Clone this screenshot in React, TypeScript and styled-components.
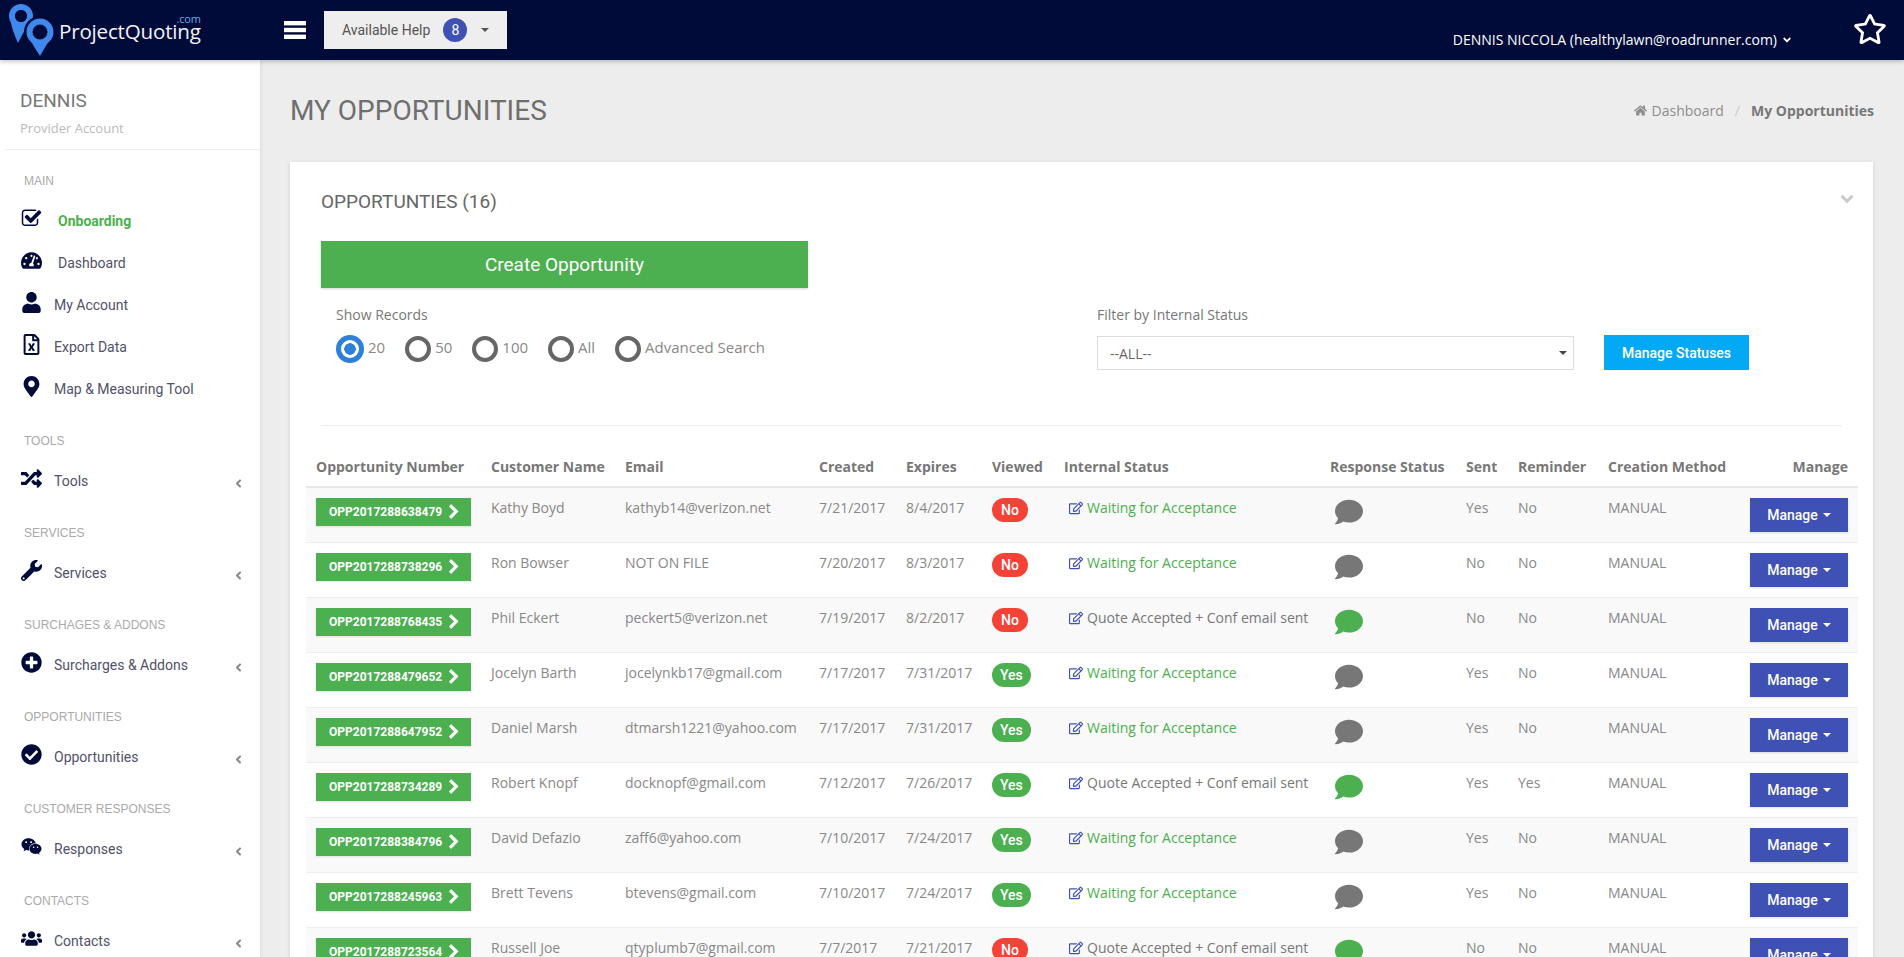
import styled, { createGlobalStyle } from 'styled-components'
import {
  FaAngleDown,
  FaAngleLeft,
  FaCheckCircle,
  FaComment,
  FaHome,
  FaMapMarkerAlt,
  FaPlusCircle,
  FaRandom,
  FaRegEdit,
  FaRegFileExcel,
  FaRegStar,
  FaTachometerAlt,
  FaUser,
  FaUsers,
  FaWeixin,
  FaWrench,
} from 'react-icons/fa'

const GlobalStyle = createGlobalStyle`
  html, body {
    margin: 0;
    padding: 0;
    height: 100%;
    overflow: hidden;
    background: #ededed;
    font-family: "Open Sans", "Liberation Sans", sans-serif;
  }
  * { box-sizing: border-box; }
`

const Page = styled.div`
  display: flex;
  flex-direction: column;
  height: 100vh;
  overflow: hidden;
`
const TopBar = styled.header`
  display: flex;
  align-items: center;
  flex: none;
  height: 60px;
  background: #000b3a;
  box-shadow: 0 2px 4px rgba(0, 0, 0, 0.2);
  position: relative;
  z-index: 2;
`
const Brand = styled.div`
  display: flex;
  align-items: center;
  width: 284px;
  height: 60px;
  padding-left: 9px;
`
const BrandName = styled.div`
  position: relative;
  margin: 1px 0 0 4px;
  font-family: "Open Sans", sans-serif;
  font-size: 20.6px;
  font-weight: 500;
  letter-spacing: -0.2px;
  color: #f2f4f8;
`
const BrandCom = styled.span`
  position: absolute;
  right: 0;
  top: -5px;
  font-size: 11px;
  line-height: 14px;
  color: #6ea8e8;
`
const MenuButton = styled.div`
  display: flex;
  width: 40px;
  color: #fff;
`
const HelpButton = styled.div`
  display: flex;
  align-items: center;
  width: 183px;
  height: 38px;
  padding-left: 18px;
  background: #eeeeee;
  font-family: Roboto, sans-serif;
  font-size: 14px;
  color: #555;
`
const HelpBadge = styled.span`
  display: flex;
  align-items: center;
  justify-content: center;
  width: 24px;
  height: 24px;
  margin: 0 14px 0 13px;
  border-radius: 50%;
  background: #3f51b5;
  color: #fff;
`
const Caret = styled.span<{ $color: string }>`
  display: inline-block;
  width: 0;
  height: 0;
  border-left: 4px solid transparent;
  border-right: 4px solid transparent;
  border-top: 4px solid ${(p) => p.$color};
`
const UserMenu = styled.div`
  display: flex;
  align-items: center;
  gap: 4px;
  margin: 19px 0 0 auto;
  font-family: "Open Sans", sans-serif;
  font-size: 14px;
  color: #fff;
`
const StarButton = styled.div`
  display: flex;
  margin: -3px 17px 0 60px;
  font-size: 34px;
  color: #fff;
`
const Body = styled.div`
  display: flex;
  flex: 1;
  min-height: 0;
`
const Sidebar = styled.aside`
  flex: none;
  width: 260px;
  background: #fff;
  box-shadow: 1px 0 3px rgba(0, 0, 0, 0.08);
  overflow: hidden;
`
const Profile = styled.div`
  height: 90px;
  margin-left: 5px;
  padding: 30px 0 0 15px;
  border-bottom: 1px solid #eeeeee;
`
const ProfileName = styled.div`
  font-family: Roboto, sans-serif;
  font-size: 19px;
  line-height: 22px;
  color: #777;
`
const ProfileRole = styled.div`
  margin-top: 7px;
  font-size: 13px;
  line-height: 18px;
  color: #bbb;
`
const NavLabel = styled.div`
  height: 20px;
  margin: 21px 0 9px 24px;
  font-family: "Liberation Sans", Arial, sans-serif;
  font-size: 12px;
  line-height: 20px;
  color: #aaa;
`
const NavRow = styled.div`
  display: flex;
  align-items: center;
  height: 42px;
  padding: 0 15px 0 20px;
  font-family: Roboto, sans-serif;
  font-size: 14px;
  color: #51516a;
`
const NavIcon = styled.span`
  display: flex;
  justify-content: center;
  flex: none;
  width: 23px;
  margin-bottom: 6px;
  font-size: 21px;
  color: #000b3a;
`
const NavText = styled.span<{ $shift?: boolean; $on?: boolean }>`
  margin-left: ${(p) => (p.$shift ? '15px' : '11px')};
  font-weight: ${(p) => (p.$on ? 700 : 400)};
  color: ${(p) => (p.$on ? '#4caf50' : 'inherit')};
`
const NavArrow = styled.span`
  display: flex;
  margin: 4px 0 0 auto;
  font-size: 13px;
  color: #888;
`
const Main = styled.main`
  flex: 1;
  min-width: 0;
  padding: 0 31px 0 30px;
`
const PageHead = styled.div`
  display: flex;
  align-items: center;
  justify-content: space-between;
  height: 102px;
  padding-bottom: 1px;
`
const PageTitle = styled.h1`
  margin: 0;
  font-family: Roboto, sans-serif;
  font-size: 28px;
  font-weight: 400;
  color: #6f6f6f;
`
const Crumbs = styled.div`
  display: flex;
  align-items: center;
  margin-right: -1px;
  font-size: 14px;
  color: #8d8d8d;
`
const CrumbSep = styled.span`
  margin: 0 11px;
  color: #ccc;
`
const CrumbNow = styled.strong`
  font-weight: 700;
  color: #777;
`
const CrumbHome = styled.span`
  display: flex;
  margin-right: 5px;
  font-size: 13px;
`
const Card = styled.section`
  padding: 0 31px;
  background: #fff;
  box-shadow: 0 1px 4px rgba(0, 0, 0, 0.12);
`
const CardHead = styled.div`
  display: flex;
  align-items: center;
  justify-content: space-between;
  height: 79px;
`
const CardTitle = styled.h2`
  margin: 0;
  font-family: Roboto, sans-serif;
  font-size: 19px;
  font-weight: 400;
  color: #666;
`
const CardToggle = styled.span`
  display: flex;
  margin: -6px -15px 0 0;
  font-size: 20px;
  color: #ccc;
`
const CreateButton = styled.div`
  display: flex;
  align-items: center;
  justify-content: center;
  width: 487px;
  height: 47px;
  background: #4caf50;
  box-shadow: 0 1px 2px rgba(0, 0, 0, 0.16);
  font-family: Roboto, sans-serif;
  font-size: 19px;
  font-weight: 400;
  color: #fff;
`
const Filters = styled.div`
  display: grid;
  grid-template-columns: 761px 1fr;
  padding: 17px 0 55px 15px;
  border-bottom: 1px solid #eeeeee;
`
const FieldLabel = styled.div`
  margin-bottom: 10px;
  font-size: 14px;
  line-height: 20px;
  color: #777;
`
const RadioRow = styled.div`
  display: flex;
  align-items: center;
  gap: 20px;
  height: 28px;
  font-size: 15px;
  color: #888;
`
const RadioItem = styled.label`
  display: flex;
  align-items: center;
  gap: 4px;
`
const RadioText = styled.span`
  margin-bottom: 4px;
`
const RadioBox = styled.input`
  appearance: none;
  flex: none;
  width: 26px;
  height: 26px;
  margin: 0;
  border: 4px solid #666;
  border-radius: 50%;
  background: #fff;
  &:checked {
    width: 28px;
    height: 28px;
    border: 5px solid #2f80d8;
    background: radial-gradient(circle, #2f80d8 0 5.5px, #fff 6px);
  }
`
const FilterControls = styled.div`
  display: flex;
  align-items: center;
  gap: 30px;
`
const SelectWrap = styled.div`
  position: relative;
  display: flex;
  span {
    position: absolute;
    right: 7px;
    top: 15px;
    pointer-events: none;
  }
`
const StatusSelect = styled.select`
  width: 477px;
  height: 34px;
  padding: 1px 0 0 12px;
  border: 1px solid #ddd;
  border-radius: 0;
  appearance: none;
  background: #fff;
  font-family: "Open Sans", sans-serif;
  font-size: 14px;
  color: #666;
`
const StatusButton = styled.div`
  display: flex;
  align-items: center;
  justify-content: center;
  width: 145px;
  height: 35px;
  background: #03a9f4;
  font-family: Roboto, sans-serif;
  font-size: 14px;
  font-weight: 500;
  color: #fff;
`
const Table = styled.table`
  width: 1552px;
  margin-left: -15px;
  border-collapse: collapse;
  table-layout: fixed;
  font-size: 14px;
`
const Col = styled.col<{ $w: number }>`
  width: ${(p) => p.$w}px;
`
const Th = styled.th<{ $right?: boolean }>`
  height: 61px;
  padding: 0 10px 9px;
  border-bottom: 2px solid #e8e8e8;
  vertical-align: bottom;
  text-align: ${(p) => (p.$right ? 'right' : 'left')};
  font-weight: 700;
  line-height: 20px;
  white-space: nowrap;
  color: #777;
`
const Row = styled.tr`
  border-top: 1px solid #eeeeee;
  &:nth-child(odd) {
    background: #f9f9f9;
  }
`
const Td = styled.td<{ $right?: boolean }>`
  height: 55px;
  padding: 10px;
  vertical-align: top;
  text-align: ${(p) => (p.$right ? 'right' : 'left')};
  line-height: 20px;
  white-space: nowrap;
  color: #888;
`
const OppButton = styled.div`
  display: flex;
  align-items: center;
  gap: 4px;
  width: 155px;
  height: 28px;
  padding-left: 13px;
  background: #4caf50;
  box-shadow: 0 1px 2px rgba(0, 0, 0, 0.1);
  font-family: Roboto, sans-serif;
  font-size: 12px;
  font-weight: 700;
  color: #fff;
`
const Pill = styled.span<{ $yes: boolean }>`
  display: inline-block;
  height: 24px;
  padding: 0 ${(p) => (p.$yes ? '8px' : '9px')};
  border-radius: 12px;
  background: ${(p) => (p.$yes ? '#4caf50' : '#f44336')};
  font-family: Roboto, sans-serif;
  font-size: 14px;
  font-weight: 500;
  line-height: 24px;
  color: #fff;
`
const StatusText = styled.span<{ $waiting: boolean }>`
  display: flex;
  align-items: center;
  gap: 4px;
  margin-left: 5px;
  color: ${(p) => (p.$waiting ? '#4caf50' : '#777')};
  svg {
    color: #3f51b5;
  }
`
const Bubble = styled.span<{ $on: boolean }>`
  display: flex;
  margin-left: 5px;
  font-size: 28px;
  color: ${(p) => (p.$on ? '#4caf50' : '#777')};
`
const ManageButton = styled.div`
  display: inline-flex;
  align-items: center;
  justify-content: center;
  gap: 5px;
  width: 98px;
  height: 34px;
  background: #3f51b5;
  box-shadow: 0 1px 2px rgba(0, 0, 0, 0.12);
  font-family: Roboto, sans-serif;
  font-size: 14px;
  font-weight: 500;
  color: #fff;
`

function LogoMark() {
  return (
    <svg width="46" height="56" viewBox="9 2 46 56">
      <circle cx="21" cy="16" r="9" fill="none" stroke="#3f88ec" strokeWidth="6" />
      <path d="M10.5 20 Q12 30 18 43 L27 26 Z" fill="#3f88ec" />
      <circle cx="21" cy="16" r="6" fill="#000b3a" />
      <circle cx="40" cy="32" r="12" fill="none" stroke="#000b3a" strokeWidth="8" />
      <path d="M28.5 36 Q33 46 40 56 Q46 46 51.5 36 Z" fill="#3f88ec" />
      <circle cx="40" cy="32" r="10.5" fill="#000b3a" stroke="#3f88ec" strokeWidth="6" />
    </svg>
  )
}

function MenuBars() {
  return (
    <svg width="22" height="18" viewBox="0 0 22 18" fill="currentColor">
      <rect width="22" height="4.4" />
      <rect y="6.8" width="22" height="4.4" />
      <rect y="13.6" width="22" height="4.4" />
    </svg>
  )
}

function CheckSquare() {
  return (
    <svg width="21" height="21" viewBox="0 0 1792 1792" fill="currentColor">
      <path d="M1472 930v318q0 119-84.5 203.5t-203.5 84.5h-832q-119 0-203.5-84.5t-84.5-203.5v-832q0-119 84.5-203.5t203.5-84.5h832q63 0 117 25 15 7 18 23 3 17-9 29l-49 49q-10 10-23 10-3 0-9-2-23-6-45-6h-832q-66 0-113 47t-47 113v832q0 66 47 113t113 47h832q66 0 113-47t47-113v-254q0-13 9-22l64-64q10-10 23-10 6 0 12 3 20 8 20 29zm231-489l-814 814q-24 24-57 24t-57-24l-430-430q-24-24-24-57t24-57l110-110q24-24 57-24t57 24l263 263 647-647q24-24 57-24t57 24l110 110q24 24 24 57t-24 57z" />
    </svg>
  )
}

function ChevronBold() {
  return (
    <svg width="16" height="16" viewBox="0 0 1792 1792" fill="currentColor">
      <path d="M1363 877l-742 742q-19 19-45 19t-45-19l-166-166q-19-19-19-45t19-45l531-531-531-531q-19-19-19-45t19-45l166-166q19-19 45-19t45 19l742 742q19 19 19 45t-19 45z" />
    </svg>
  )
}

const mainNav = [
  { text: 'Onboarding', icon: <CheckSquare />, shift: true, on: true },
  { text: 'Dashboard', icon: <FaTachometerAlt />, shift: true },
  { text: 'My Account', icon: <FaUser /> },
  { text: 'Export Data', icon: <FaRegFileExcel /> },
  { text: 'Map & Measuring Tool', icon: <FaMapMarkerAlt /> },
]

const navGroups = [
  { label: 'TOOLS', text: 'Tools', icon: <FaRandom /> },
  { label: 'SERVICES', text: 'Services', icon: <FaWrench /> },
  { label: 'SURCHAGES & ADDONS', text: 'Surcharges & Addons', icon: <FaPlusCircle /> },
  { label: 'OPPORTUNITIES', text: 'Opportunities', icon: <FaCheckCircle /> },
  { label: 'CUSTOMER RESPONSES', text: 'Responses', icon: <FaWeixin /> },
  { label: 'CONTACTS', text: 'Contacts', icon: <FaUsers /> },
]

const WAITING = 'Waiting for Acceptance'
const QUOTE = 'Quote Accepted + Conf email sent'

const rows = [
  ['OPP2017288638479', 'Kathy Boyd', 'kathyb14@verizon.net', '7/21/2017', '8/4/2017', 'No', WAITING, 'Yes', 'No'],
  ['OPP2017288738296', 'Ron Bowser', 'NOT ON FILE', '7/20/2017', '8/3/2017', 'No', WAITING, 'No', 'No'],
  ['OPP2017288768435', 'Phil Eckert', 'peckert5@verizon.net', '7/19/2017', '8/2/2017', 'No', QUOTE, 'No', 'No'],
  ['OPP2017288479652', 'Jocelyn Barth', 'jocelynkb17@gmail.com', '7/17/2017', '7/31/2017', 'Yes', WAITING, 'Yes', 'No'],
  ['OPP2017288647952', 'Daniel Marsh', 'dtmarsh1221@yahoo.com', '7/17/2017', '7/31/2017', 'Yes', WAITING, 'Yes', 'No'],
  ['OPP2017288734289', 'Robert Knopf', 'docknopf@gmail.com', '7/12/2017', '7/26/2017', 'Yes', QUOTE, 'Yes', 'Yes'],
  ['OPP2017288384796', 'David Defazio', 'zaff6@yahoo.com', '7/10/2017', '7/24/2017', 'Yes', WAITING, 'Yes', 'No'],
  ['OPP2017288245963', 'Brett Tevens', 'btevens@gmail.com', '7/10/2017', '7/24/2017', 'Yes', WAITING, 'Yes', 'No'],
  ['OPP2017288723564', 'Russell Joe', 'qtyplumb7@gmail.com', '7/7/2017', '7/21/2017', 'No', QUOTE, 'No', 'No'],
]

const columns = [175, 134, 194, 87, 86, 72, 266, 136, 52, 90, 130, 130]
const headers = [
  'Opportunity Number',
  'Customer Name',
  'Email',
  'Created',
  'Expires',
  'Viewed',
  'Internal Status',
  'Response Status',
  'Sent',
  'Reminder',
  'Creation Method',
]

export default function App() {
  return (
    <Page>
      <GlobalStyle />
      <TopBar>
        <Brand>
          <LogoMark />
          <BrandName>
            ProjectQuoting
            <BrandCom>.com</BrandCom>
          </BrandName>
        </Brand>
        <MenuButton>
          <MenuBars />
        </MenuButton>
        <HelpButton>
          Available Help
          <HelpBadge>8</HelpBadge>
          <Caret $color="#555" />
        </HelpButton>
        <UserMenu>
          DENNIS NICCOLA (healthylawn@roadrunner.com)
          <FaAngleDown size={12} />
        </UserMenu>
        <StarButton>
          <FaRegStar />
        </StarButton>
      </TopBar>
      <Body>
        <Sidebar>
          <Profile>
            <ProfileName>DENNIS</ProfileName>
            <ProfileRole>Provider Account</ProfileRole>
          </Profile>
          <NavLabel>MAIN</NavLabel>
          {mainNav.map((item) => (
            <NavRow key={item.text}>
              <NavIcon>{item.icon}</NavIcon>
              <NavText $shift={item.shift} $on={item.on}>
                {item.text}
              </NavText>
            </NavRow>
          ))}
          {navGroups.map((group) => (
            <div key={group.label}>
              <NavLabel>{group.label}</NavLabel>
              <NavRow>
                <NavIcon>{group.icon}</NavIcon>
                <NavText>{group.text}</NavText>
                <NavArrow>
                  <FaAngleLeft />
                </NavArrow>
              </NavRow>
            </div>
          ))}
        </Sidebar>
        <Main>
          <PageHead>
            <PageTitle>MY OPPORTUNITIES</PageTitle>
            <Crumbs>
              <CrumbHome>
                <FaHome />
              </CrumbHome>
              Dashboard
              <CrumbSep>/</CrumbSep>
              <CrumbNow>My Opportunities</CrumbNow>
            </Crumbs>
          </PageHead>
          <Card>
            <CardHead>
              <CardTitle>OPPORTUNTIES (16)</CardTitle>
              <CardToggle>
                <FaAngleDown />
              </CardToggle>
            </CardHead>
            <CreateButton>Create Opportunity</CreateButton>
            <Filters>
              <div>
                <FieldLabel>Show Records</FieldLabel>
                <RadioRow>
                  {['20', '50', '100', 'All', 'Advanced Search'].map((opt) => (
                    <RadioItem key={opt}>
                      <RadioBox type="radio" name="records" defaultChecked={opt === '20'} />
                      <RadioText>{opt}</RadioText>
                    </RadioItem>
                  ))}
                </RadioRow>
              </div>
              <div>
                <FieldLabel>Filter by Internal Status</FieldLabel>
                <FilterControls>
                  <SelectWrap>
                    <StatusSelect>
                      <option>--ALL--</option>
                    </StatusSelect>
                    <Caret $color="#444" />
                  </SelectWrap>
                  <StatusButton>Manage Statuses</StatusButton>
                </FilterControls>
              </div>
            </Filters>
            <Table>
              <colgroup>
                {columns.map((w, i) => (
                  <Col key={i} $w={w} />
                ))}
              </colgroup>
              <thead>
                <tr>
                  {headers.map((h) => (
                    <Th key={h}>{h}</Th>
                  ))}
                  <Th $right>Manage</Th>
                </tr>
              </thead>
              <tbody>
                {rows.map((r) => (
                  <Row key={r[0]}>
                    <Td>
                      <OppButton>
                        {r[0]}
                        <ChevronBold />
                      </OppButton>
                    </Td>
                    <Td>{r[1]}</Td>
                    <Td>{r[2]}</Td>
                    <Td>{r[3]}</Td>
                    <Td>{r[4]}</Td>
                    <Td>
                      <Pill $yes={r[5] === 'Yes'}>{r[5]}</Pill>
                    </Td>
                    <Td>
                      <StatusText $waiting={r[6] === WAITING}>
                        <FaRegEdit size={14} />
                        {r[6]}
                      </StatusText>
                    </Td>
                    <Td>
                      <Bubble $on={r[6] === QUOTE}>
                        <FaComment />
                      </Bubble>
                    </Td>
                    <Td>{r[7]}</Td>
                    <Td>{r[8]}</Td>
                    <Td>MANUAL</Td>
                    <Td $right>
                      <ManageButton>
                        Manage
                        <Caret $color="#fff" />
                      </ManageButton>
                    </Td>
                  </Row>
                ))}
              </tbody>
            </Table>
          </Card>
        </Main>
      </Body>
    </Page>
  )
}
